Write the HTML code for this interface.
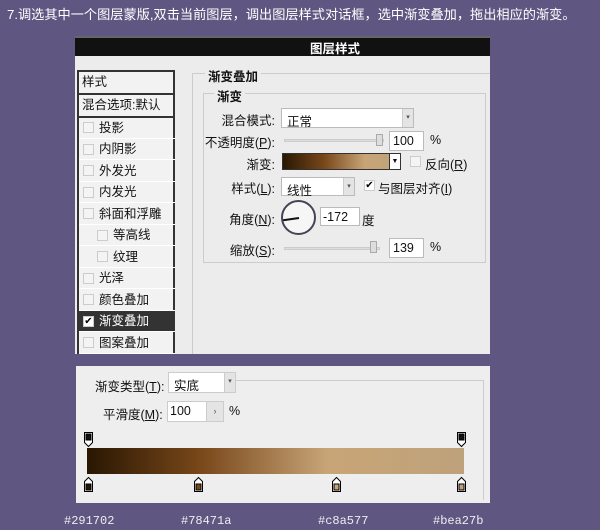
<!DOCTYPE html>
<html><head><meta charset="utf-8"><style>
*{margin:0;padding:0;box-sizing:border-box}
body{width:600px;height:530px;background:#5f5781;position:relative;overflow:hidden;font-family:"Liberation Sans","Noto Sans CJK SC",sans-serif;font-size:12.5px;color:#111}
.a{position:absolute;white-space:nowrap}
.box{position:absolute;background:#fff;border:1px solid #bbb}
.cb{position:absolute;width:11px;height:11px;border:1px solid #ccc;background:#f4f4f4}
.row{position:absolute;left:0;width:96px;height:21px;border-bottom:1px solid #fff;padding-left:20px;line-height:20px}
.lbl{position:absolute;text-align:right;width:80px;white-space:nowrap}
.dd{position:absolute;width:11px;top:0;bottom:0;right:0;background:#e4e4e4;border-left:1px solid #ccc;font-size:7px;text-align:center;line-height:18px;color:#555}
.hex{position:absolute;color:#eee;font-family:'Liberation Mono',monospace;font-size:12px;top:514px}
</style></head><body>
<div class="a" style="left:7px;top:4px;color:#fff;font-size:13.2px">7.调选其中一个图层蒙版,双击当前图层，调出图层样式对话框，选中渐变叠加，拖出相应的渐变。</div>

<div class="a" style="left:75px;top:36px;width:415px;height:318px;background:#ececec"></div>
<div class="a" style="left:75px;top:36px;width:415px;height:20px;background:#111;border-top:2px solid #666"></div>
<div class="a" style="left:310px;top:38px;color:#fff;font-weight:bold;font-size:12.5px">图层样式</div>

<div class="a" style="left:77px;top:70px;width:98px;height:284px;background:#f2f2f2;border:2px solid #333;border-bottom:none">
<div class="row" style="top:0;padding-left:3px;height:23px;border-bottom:2px solid #333">样式</div>
<div class="row" style="top:23px;padding-left:3px;height:23px;border-bottom:2px solid #333">混合选项:默认</div>
<div class="row" style="top:46px">投影</div>
<div class="row" style="top:67px">内阴影</div>
<div class="row" style="top:89px">外发光</div>
<div class="row" style="top:110px">内发光</div>
<div class="row" style="top:132px">斜面和浮雕</div>
<div class="row" style="top:153px;padding-left:34px">等高线</div>
<div class="row" style="top:175px;padding-left:34px">纹理</div>
<div class="row" style="top:196px">光泽</div>
<div class="row" style="top:218px">颜色叠加</div>
<div class="row" style="top:239px;background:#333;color:#fff">渐变叠加</div>
<div class="row" style="top:261px">图案叠加</div>
</div>
<div class="cb" style="left:83px;top:122px"></div>
<div class="cb" style="left:83px;top:144px"></div>
<div class="cb" style="left:83px;top:165px"></div>
<div class="cb" style="left:83px;top:187px"></div>
<div class="cb" style="left:83px;top:208px"></div>
<div class="cb" style="left:97px;top:230px"></div>
<div class="cb" style="left:97px;top:251px"></div>
<div class="cb" style="left:83px;top:273px"></div>
<div class="cb" style="left:83px;top:294px"></div>
<div class="cb" style="left:83px;top:316px;background:#fff;font-size:10px;line-height:9px;text-align:center;color:#000">✔</div>
<div class="cb" style="left:83px;top:337px"></div>

<div class="a" style="left:192px;top:73px;width:298px;height:281px;border-left:1px solid #ccc;border-top:1px solid #ccc"></div>
<div class="a" style="left:205px;top:66px;background:#ececec;padding:0 3px;font-weight:bold">渐变叠加</div>
<div class="a" style="left:203px;top:93px;width:283px;height:170px;border:1px solid #ccc"></div>
<div class="a" style="left:214px;top:86px;background:#ececec;padding:0 3px;font-weight:bold">渐变</div>

<div class="lbl" style="left:195px;top:110px">混合模式:</div>
<div class="box" style="left:281px;top:108px;width:133px;height:20px;padding:2px 5px">正常<div class="dd">▾</div></div>
<div class="lbl" style="left:195px;top:132px">不透明度(<u>P</u>):</div>
<div class="a" style="left:284px;top:139px;width:100px;height:3px;background:#ddd;border:1px solid #ccc"></div>
<div class="a" style="left:376px;top:134px;width:7px;height:12px;background:#ddd;border:1px solid #aaa"></div>
<div class="box" style="left:389px;top:131px;width:35px;height:20px;padding:2px 3px">100</div>
<div class="a" style="left:430px;top:133px">%</div>
<div class="lbl" style="left:195px;top:154px">渐变:</div>
<div class="a" style="left:282px;top:153px;width:119px;height:17px;border:1px solid #333;background:linear-gradient(90deg,#291702,#78471a 35%,#c8a577 70%,#bea27b)"></div>
<div class="a" style="left:389px;top:153px;width:12px;height:17px;background:#fff;border:1px solid #333;font-size:7px;text-align:center;line-height:15px">▼</div>
<div class="cb" style="left:410px;top:156px"></div>
<div class="a" style="left:425px;top:154px">反向(<u>R</u>)</div>
<div class="lbl" style="left:195px;top:178px">样式(<u>L</u>):</div>
<div class="box" style="left:281px;top:177px;width:74px;height:19px;padding:2px 5px">线性<div class="dd">▾</div></div>
<div class="cb" style="left:364px;top:180px;background:#fff;font-size:10px;line-height:9px;text-align:center;color:#000">✔</div>
<div class="a" style="left:378px;top:178px">与图层对齐(<u>I</u>)</div>
<div class="lbl" style="left:195px;top:209px">角度(<u>N</u>):</div>
<div class="a" style="left:281px;top:200px;width:35px;height:35px;border-radius:50%;border:2px solid #445;background:#f6f6f6"></div>
<div class="a" style="left:283px;top:217px;width:16px;height:2px;background:#111;transform:rotate(-8deg);transform-origin:right center"></div>
<div class="box" style="left:320px;top:207px;width:40px;height:19px;padding:2px 2px">-172</div>
<div class="a" style="left:362px;top:210px">度</div>
<div class="lbl" style="left:195px;top:240px">缩放(<u>S</u>):</div>
<div class="a" style="left:284px;top:247px;width:96px;height:3px;background:#ddd;border:1px solid #ccc"></div>
<div class="a" style="left:370px;top:241px;width:7px;height:12px;background:#ddd;border:1px solid #aaa"></div>
<div class="box" style="left:389px;top:238px;width:35px;height:20px;padding:2px 3px">139</div>
<div class="a" style="left:430px;top:240px">%</div>

<div class="a" style="left:76px;top:366px;width:414px;height:137px;background:#eee"></div>
<div class="a" style="left:236px;top:380px;width:248px;height:120px;border-top:1px solid #ccc;border-right:1px solid #ccc"></div>
<div class="a" style="left:95px;top:376px">渐变类型(<u>T</u>):</div>
<div class="box" style="left:168px;top:372px;width:68px;height:21px;padding:2px 5px;border-color:#ccc">实底<div class="dd">▾</div></div>
<div class="a" style="left:103px;top:404px">平滑度(<u>M</u>):</div>
<div class="box" style="left:167px;top:401px;width:57px;height:21px;padding:2px 2px;border-color:#ccc">100<div class="dd" style="width:17px;font-size:9px">›</div></div>
<div class="a" style="left:229px;top:404px">%</div>
<div class="a" style="left:87px;top:448px;width:377px;height:26px;background:linear-gradient(90deg,#291702,#78471a 30%,#c8a577 64%,#bea27b)"></div>
<svg class="a" style="left:0;top:0" width="600" height="530">
<g stroke="#000" stroke-width="1">
<path d="M84.5 432.5h8v10l-4 4l-4-4z" fill="#fff"/><rect x="86" y="434" width="5" height="6" fill="#111"/>
<path d="M457.5 432.5h8v10l-4 4l-4-4z" fill="#fff"/><rect x="459" y="434" width="5" height="6" fill="#111"/>
<path d="M84.5 491.5h8v-10l-4-4l-4 4z" fill="#fff"/><rect x="86" y="484" width="5" height="6" fill="#291702"/>
<path d="M194.5 491.5h8v-10l-4-4l-4 4z" fill="#fff"/><rect x="196" y="484" width="5" height="6" fill="#78471a"/>
<path d="M332.5 491.5h8v-10l-4-4l-4 4z" fill="#fff"/><rect x="334" y="484" width="5" height="6" fill="#c8a577"/>
<path d="M457.5 491.5h8v-10l-4-4l-4 4z" fill="#fff"/><rect x="459" y="484" width="5" height="6" fill="#bea27b"/>
</g></svg>
<div class="hex" style="left:64px">#291702</div>
<div class="hex" style="left:181px">#78471a</div>
<div class="hex" style="left:318px">#c8a577</div>
<div class="hex" style="left:433px">#bea27b</div>
</body></html>
